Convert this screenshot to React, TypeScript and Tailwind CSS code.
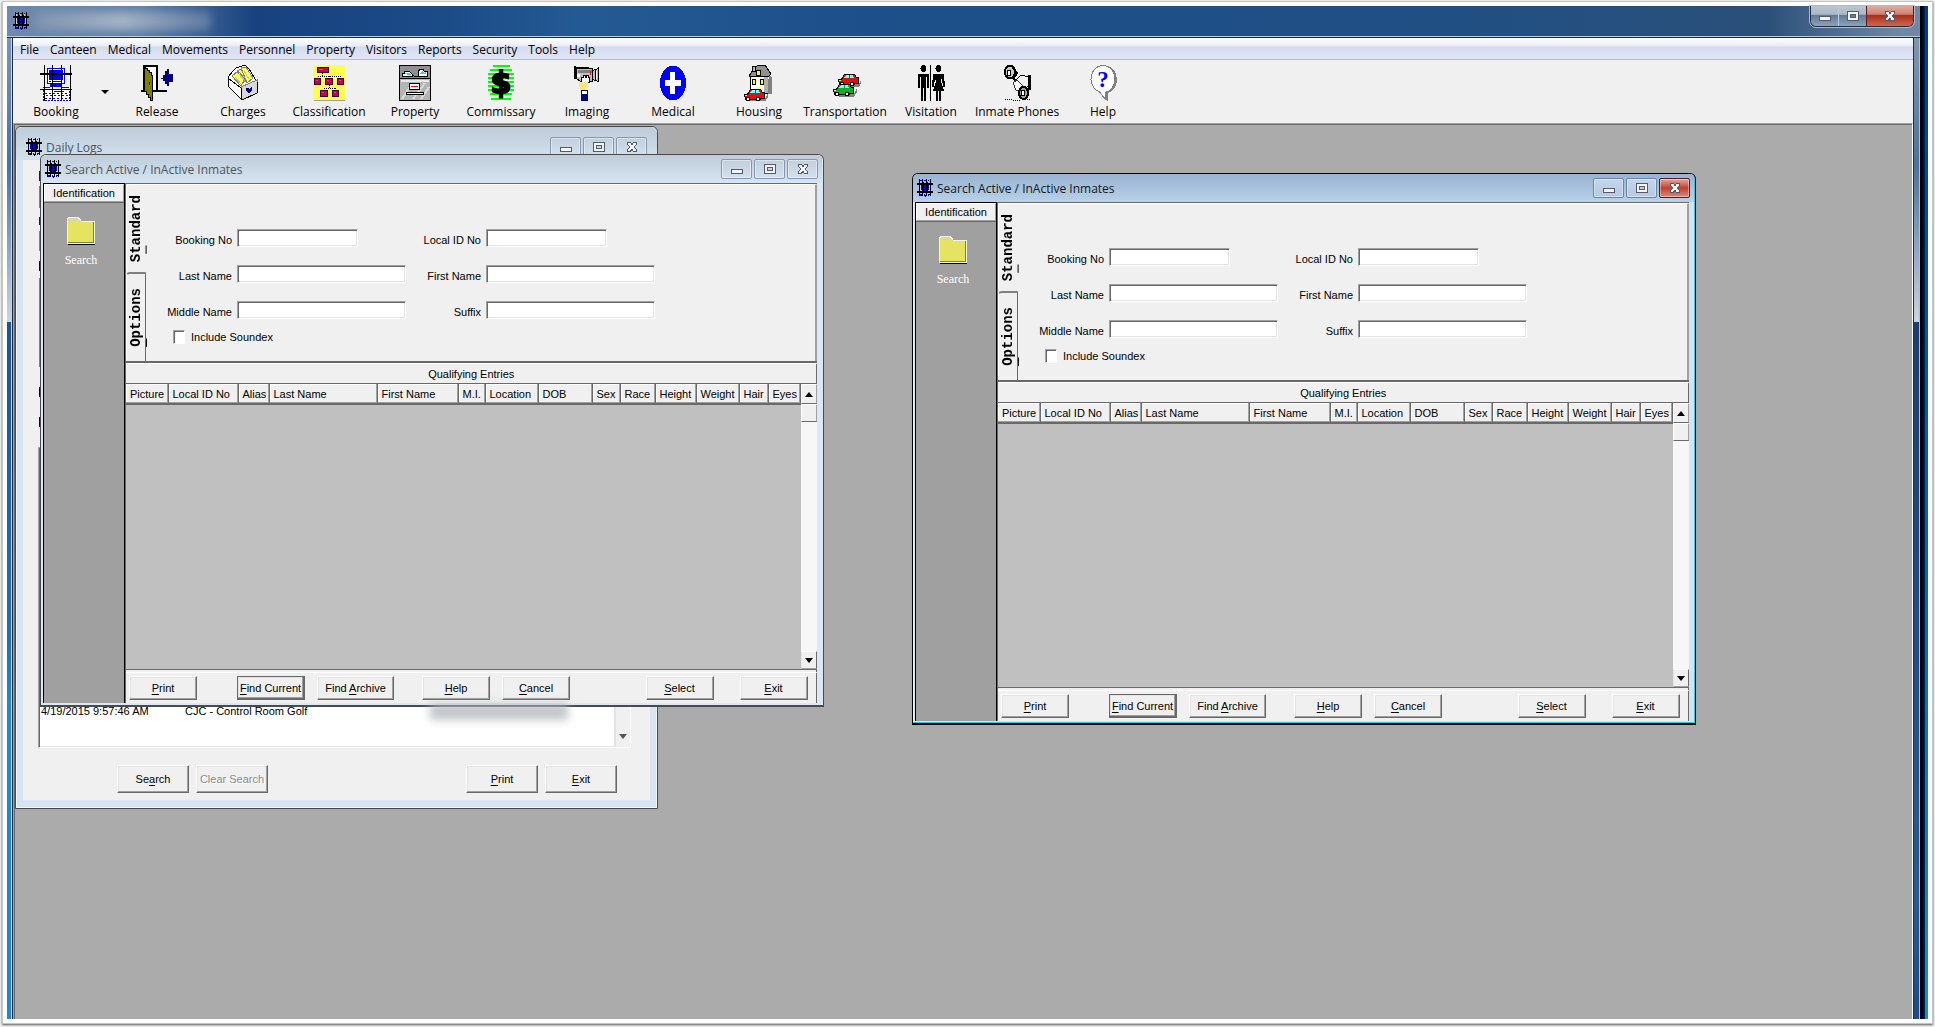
import { useId } from 'react';
import type { ReactNode } from 'react';

const MENU = [
  'File',
  'Canteen',
  'Medical',
  'Movements',
  'Personnel',
  'Property',
  'Visitors',
  'Reports',
  'Security',
  'Tools',
  'Help',
];

const COLUMNS = [
  { label: 'Picture', width: 42 },
  { label: 'Local ID No', width: 70 },
  { label: 'Alias', width: 31 },
  { label: 'Last Name', width: 108 },
  { label: 'First Name', width: 81 },
  { label: 'M.I.', width: 27 },
  { label: 'Location', width: 53 },
  { label: 'DOB', width: 54 },
  { label: 'Sex', width: 28 },
  { label: 'Race', width: 35 },
  { label: 'Height', width: 41 },
  { label: 'Weight', width: 43 },
  { label: 'Hair', width: 29 },
  { label: 'Eyes', width: 32 },
];

// "&" marks the access key, as in a Windows resource string
function Hot({ text }: { text: string }) {
  const at = text.indexOf('&');
  if (at < 0) return <span>{text}</span>;
  return (
    <span>
      {text.slice(0, at)}
      <span className="underline underline-offset-2">{text[at + 1]}</span>
      {text.slice(at + 2)}
    </span>
  );
}

function Glyph({ children }: { children: ReactNode }) {
  return (
    <svg viewBox="0 0 32 36" className="h-9 w-8" shapeRendering="crispEdges" aria-hidden="true">
      {children}
    </svg>
  );
}

function BarsIcon() {
  return (
    <svg viewBox="0 0 16 18" className="h-[18px] w-4 shrink-0" shapeRendering="crispEdges" aria-hidden="true">
      <path d="M3 1h2v1H3zM7 1h2v1H7zM11 1h1v1h-1zM4 6h1v5H4zM7 6h2v6H7zM11 6h1v5h-1zM3 15h1v2H3zM7 15h1v2H7zM11 15h1v2h-1z" fill="#0000ff" />
      <path d="M3 2h1v2H3zM7 2h1v2H7zM11 2h1v2h-1zM3 6h1v6H3zM12 6h1v6h-1z" fill="#c8ccd8" />
      <path d="M2 0h1v17H2zM5 0h1v17H5zM6 3h1v10H6zM9 0h1v17H9zM10 3h1v10h-1zM13 0h1v17h-1zM0 4h16v2H0zM0 12h16v2H0zM4 15h1v2H4zM8 16h1v2H8zM12 15h1v1h-1z" fill="#000" />
    </svg>
  );
}

function Booking() {
  return (
    <Glyph>
      <path d="M7.500 3.500h17v15h-17z" fill="#fff" stroke="#00f" />
      <path d="M9 5h14v10H9z" fill="#00f" />
      <path d="M9 16h2v1H9zM13 16h8v1h-8zM10 19h12v3H10zM3 22h7v1H3zM22 22h7v1h-7z" fill="#00f" />
      <path d="M3.500 24.500h26v11h-26z" fill="#fff" stroke="#00f" strokeDasharray="2 1" />
      <path d="M5 28h23M6 30h22M5 33h23" stroke="#00f" strokeDasharray="2 2" />
      <path d="M14 26h10v1H14z" fill="#00f" />
      <path d="M4 0h1v36H4zM12 0h1v36h-1zM21 0h1v36h-1zM30 0h1v36h-1zM0 8h32v2H0zM0 24h32v1H0z" fill="#000" />
    </Glyph>
  );
}

function Release() {
  return (
    <Glyph>
      <path d="M2 0h15v25h9v2H0v-2h2z" fill="#000" />
      <path d="M5 2h10v23H5z" fill="#fff" />
      <path d="M3 3h3v2h2v2h2v3h1v25H9v-3H7v-3H5v-3H3z" fill="#808000" stroke="#000" />
      <path d="M8 17h1v3H8z" fill="#000" />
      <path d="M20 13h2v-3h2V6h2V4h2v5h4v8h-4v4h-2v-2h-2v-3h-2v-2h-2z" fill="#000080" />
    </Glyph>
  );
}

function Charges() {
  return (
    <Glyph>
      <path d="M1 12 6 6l3-3 9-3 4 4 5 8 3 6v10l-15 7L1 21z" fill="#fff" stroke="#000" />
      <path d="m5 11 6-5 7 8-4 7zM10 6l6-3 7 9-5 5z" fill="#ffff40" stroke="#808080" />
      <path d="m14 3 5-1 7 11-6 5z" fill="#ffff60" stroke="#808080" />
      <path d="m8 12 6 7M12 9l6 7M17 6l5 8" stroke="#c0c0a0" />
      <path d="m14 22 16-7v13l-15 7z" fill="#d8d8d8" stroke="#808080" />
      <path d="M1 13l13 10v12M1 13v8l14 14 15-7V17" fill="none" stroke="#000" />
      <path d="M19 23h2l1 1 3-3v4l-3 4-3-3z" fill="#000080" />
    </Glyph>
  );
}

function Classification() {
  return (
    <Glyph>
      <path d="M1 1h32v35H1z" fill="#a0a0a0" />
      <path d="M0 0h32v35H0z" fill="#ffff50" />
      <path d="M9 8v3M5 11h22M16 11v3M5 11v3M27 11v3M16 20v3M11 23h11M11 23v3M22 23v3" stroke="#000" strokeDasharray="1 1" fill="none" />
      <g fill="#c00060" stroke="#400020">
        <path d="M4.500 2.500h11v5h-11zM1.500 13.500h6v6h-6zM12.500 13.500h7v6h-7zM24.500 13.500h6v6h-6zM7.500 25.500h7v6h-7zM19.500 25.500h6v6h-6z" />
      </g>
      <path d="M6 4h4v1H6zM3 15h2v1H3zM14 15h2v1h-2zM26 15h2v1h-2zM9 27h2v1H9zM21 27h2v1h-2z" fill="#ff3090" />
    </Glyph>
  );
}

function Property() {
  return (
    <Glyph>
      <path d="M.5.500h31v35H.5z" fill="#b4b4b4" stroke="#000" />
      <path d="M1 1h30v12H1z" fill="#909090" />
      <path d="M3 11V8h2V6h5l3 3v2zM19 11V7l2-3h3l1 2h3v5z" fill="#fff" stroke="#000" />
      <path d="M5 8h5l2 2H9zM20 9l3-3 2 2 2-1v2z" fill="#20d8e0" />
      <path d="m12 8 3 3h4" fill="none" stroke="#000" />
      <path d="M0 13h32v1H0z" fill="#000" />
      <path d="M2 15h28v2H2z" fill="#e8e8e8" />
      <path d="m3 34 8-12M14 34l12-16M22 34l8-12" stroke="#d8d8d8" strokeWidth="2" />
      <path d="M10.500 18.500h10v6h-10z" fill="#fff" stroke="#000" />
      <path d="M12 21h7v1h-7z" fill="#f00" />
      <path d="M7.500 27.500h17v2h-17z" fill="#fff" stroke="#000" />
    </Glyph>
  );
}

function Commissary() {
  return (
    <Glyph>
      <path
        d="M8 1h17M5 5h22M3 9h26M3 13h26M3 17h26M3 21h26M3 25h26M5 29h22M6 34h20"
        stroke="#00ff00"
        strokeWidth="2"
      />
      <text x="16" y="28" textAnchor="middle" fontSize="30" fontWeight="bold" fontFamily="DejaVu Sans, sans-serif" stroke="#000" strokeWidth="2">
        $
      </text>
    </Glyph>
  );
}

function Imaging() {
  return (
    <Glyph>
      <path d="M5.500 3.500h16v13h-12l-4-3zM21.500 5.500l6-2v13l-6-2z" fill="#c0c0c0" stroke="#000" />
      <path d="M3 1h2v13H3zM5 2h13v2H5zM24 4h1v12h-1zM27 2h1v15h-1z" fill="#000" />
      <path d="M7 5h14v3H7z" fill="#808080" />
      <path d="M6 9h3v3H6zM25 6h1v8h-1z" fill="#fff" />
      <path d="M19 6h1v4h-1z" fill="#f00" />
      <path d="M10 12h2v-2h2v2h1v-2h2v2h1v5h-8z" fill="#fff" stroke="#000" />
      <path d="M8 17h9v5l-2 3h-5l-2-4z" fill="#ffe680" />
      <path d="M10 25h6v4h-6z" fill="#fff" stroke="#000" />
      <path d="M10 29h7v7h-7z" fill="#000080" />
    </Glyph>
  );
}

function Medical() {
  return (
    <Glyph>
      <ellipse cx="16" cy="18" rx="13" ry="17.500" fill="#00f" />
      <path d="M13 7h5v8h6v6h-6v8h-5v-8H8v-6h5z" fill="#fff" />
    </Glyph>
  );
}

function Car({ x, y, color }: { x: number; y: number; color: string }) {
  return (
    <g transform={`translate(${x} ${y})`}>
      <path d="M4 11h17l3-6v4l-3 5H6z" fill="#808080" />
      <path d="M.5 6.500h3l3-5h10l2 3h2v6h-3l-2 1h-14z" fill={color} stroke="#000" />
      <path d="M6 5l2-3h3v3zM12 2h3l1 3h-4z" fill="#7ff" />
      <circle cx="4" cy="11" r="2" fill="#fff" stroke="#000" />
      <circle cx="14" cy="11" r="2" fill="#fff" stroke="#000" />
      <path d="M1 7h2v1H1z" fill="#ff0" />
    </g>
  );
}

function Housing() {
  return (
    <Glyph>
      <path d="m26 9 3 4v16h-5z" fill="#808080" />
      <path d="M7.500 11.500h17v17h-17z" fill="#fff" stroke="#000" />
      <path d="M21 11h4v17h-4z" fill="#b0b0b0" />
      <path d="m6 11 5-8V1h3l1-1h7l6 9-3 3z" fill="#909090" stroke="#000" />
      <path d="M9.500 1.500h3v5h-3z" fill="#c0c0c0" stroke="#000" />
      <path d="M13.500 5.500h4v5h-4z" fill="#ff0" stroke="#000" />
      <path d="M9.500 14.500h3v5h-3zM17.500 14.500h3v5h-3z" fill="#ff0" stroke="#000" />
      <path d="M14 21h4v7h-4z" fill="#ff8" />
      <Car x={1} y={23} color="#e01010" />
    </Glyph>
  );
}

function Transportation() {
  return (
    <Glyph>
      <Car x={9} y={8} color="#e01010" />
      <Car x={4} y={18} color="#10b020" />
    </Glyph>
  );
}

function Visitation() {
  return (
    <Glyph>
      <ellipse cx="8.500" cy="3.500" rx="3" ry="3.500" />
      <path d="M3 9h11v14h-2V12h-1v24H9V23H8v13H6V12H5v11H3z" />
      <path d="M15 0h1v36h-1z" />
      <ellipse cx="23.500" cy="3.500" rx="3" ry="3.500" />
      <path d="M18 9h11l1 13h-2l-1-9-1 3 3 10h-3v10h-2V26h-1v10h-2V26h-3l3-10-1-3-1 9h-2z" />
    </Glyph>
  );
}

function InmatePhones() {
  return (
    <Glyph>
      <ellipse cx="9" cy="7" rx="5" ry="6.500" fill="#c8c8c8" stroke="#000" strokeWidth="2" />
      <ellipse cx="8" cy="8" rx="2" ry="3" fill="#fff" stroke="#000" />
      <path d="m12 3 4 5-3 5M12 13l5 5" fill="none" stroke="#000" strokeWidth="2" />
      <path d="M15.500 14.500l4-4 8 1v10l-6 2-6-6z" fill="#f0f0f0" stroke="#000" />
      <path d="m12 18 4-3 6 6-3 4h-4z" fill="#fff" stroke="#333" />
      <path d="M27 10h3v15h-3z" />
      <ellipse cx="22.500" cy="28" rx="4.500" ry="6" fill="#a0a0a0" stroke="#000" strokeWidth="2" />
      <ellipse cx="22" cy="28" rx="2" ry="3" fill="#fff" stroke="#000" />
      <path d="M4 34.500h8M12 35.500h7M22 34.500h8" stroke="#000" strokeDasharray="1 1" />
    </Glyph>
  );
}

function HelpBubble() {
  return (
    <Glyph>
      <path d="M18 1c8 0 12 7 12 14 0 6-4 11-9 13v8l-8-7z" fill="#808080" />
      <path d="M16 .5C9 .5 4 7 4 14.500c0 6 4 11 8.500 12.500l6 7.500V27.500C24 26 28 21 28 14.500 28 7 23 .5 16 .5z" fill="#fff" stroke="#808080" />
      <text x="16" y="22" textAnchor="middle" fontSize="23" fontWeight="bold" fontFamily="Liberation Serif, serif" fill="#00f">
        ?
      </text>
    </Glyph>
  );
}

const TOOLS = [
  { label: 'Release', icon: <Release /> },
  { label: 'Charges', icon: <Charges /> },
  { label: 'Classification', icon: <Classification /> },
  { label: 'Property', icon: <Property /> },
  { label: 'Commissary', icon: <Commissary /> },
  { label: 'Imaging', icon: <Imaging /> },
  { label: 'Medical', icon: <Medical /> },
  { label: 'Housing', icon: <Housing /> },
  { label: 'Transportation', icon: <Transportation /> },
  { label: 'Visitation', icon: <Visitation /> },
  { label: 'Inmate Phones', icon: <InmatePhones /> },
  { label: 'Help', icon: <HelpBubble /> },
];

function ToolButton({ label, icon }: { label: string; icon: ReactNode }) {
  return (
    <button type="button" className="flex w-[86px] shrink-0 flex-col items-center pt-[5px] whitespace-nowrap">
      {icon}
      <span className="mt-[3px] leading-4">{label}</span>
    </button>
  );
}

function CaptionGlyph({ kind }: { kind: string }) {
  return (
    <svg viewBox="0 0 12 12" className="h-3 w-3" shapeRendering="crispEdges" aria-hidden="true">
      {kind === 'Minimize' && <path d="M.5 6.500h11v4H.5z" fill="#f4f4f4" stroke="#555a6b" />}
      {kind === 'Maximize' && (
        <path d="M.5 1.500h11v9H.5zM3.500 4.500h5v3h-5z" fill="#f4f4f4" stroke="#555a6b" fillRule="evenodd" />
      )}
      {kind === 'Close' && (
        <path
          d="M1.500 1.500h3L6 4l1.500-2.500h3v2L8 6l2.500 2.500v2h-3L6 8l-1.500 2.500h-3v-2L4 6 1.500 3.500z"
          fill="#f4f4f4"
          stroke="#555a6b"
        />
      )}
    </svg>
  );
}

function CaptionButtons({ active }: { active?: boolean }) {
  const plain = active
    ? 'border-[#6c84ab] bg-linear-to-b from-[#c3d5ea] to-[#b4cbe4]'
    : 'border-[#8796b4] bg-linear-to-b from-[#c2cfdd] to-[#d3e0ee]';
  const close = active ? 'border-[#5a1a20] bg-linear-to-b from-[#e0a69b] via-[#c04028] to-[#d8887a]' : plain;
  return (
    <div className="flex gap-0.5">
      {['Minimize', 'Maximize', 'Close'].map(kind => (
        <button
          key={kind}
          type="button"
          aria-label={kind}
          className={`flex h-5 w-[31px] items-center justify-center rounded-xs border inset-shadow-[0_0_0_1px_#ffffff66] ${kind === 'Close' ? close : plain}`}
        >
          <CaptionGlyph kind={kind} />
        </button>
      ))}
    </div>
  );
}

function PushButton({ text, size, disabled, focused }: { text: string; size: string; disabled?: boolean; focused?: boolean }) {
  return (
    <button
      type="button"
      disabled={disabled}
      className={`flex shrink-0 items-center justify-center border bg-[#f0f0f0] leading-4 whitespace-nowrap inset-shadow-[-1px_-1px_0_#a0a0a0,1px_1px_0_#e3e3e3] ${size} ${
        focused
          ? 'border-[#696969] border-r-2 border-b-2'
          : 'border-t-white border-r-[#696969] border-b-[#696969] border-l-white'
      } ${disabled ? 'text-[#8a8a8a] text-shadow-[1px_1px_0_#fff]' : 'text-black'}`}
    >
      <Hot text={text} />
    </button>
  );
}

function Field({ label, width }: { label: string; width: string }) {
  const id = useId();
  return (
    <>
      <label htmlFor={id} className="h-[18px] pt-1 text-right leading-[14px] whitespace-nowrap">
        {label}
      </label>
      <input
        id={id}
        type="text"
        className={`h-[18px] border border-t-[#a0a0a0] border-r-white border-b-white border-l-[#a0a0a0] bg-white px-1 outline-none inset-shadow-[1px_1px_0_#696969,-1px_-1px_0_#e3e3e3] ${width}`}
      />
    </>
  );
}

function SideBar() {
  return (
    <aside className="flex w-[82px] shrink-0 flex-col border-x border-t border-black bg-[#a0a0a0]">
      <button
        type="button"
        className="h-[18px] border border-t-white border-r-[#a0a0a0] border-b-[#a0a0a0] border-l-white bg-[#f0f0f0] leading-4 shadow-[0_1px_0_#696969]"
      >
        Identification
      </button>
      <button type="button" className="mt-3.5 flex flex-col items-center pr-1.5">
        <svg viewBox="0 0 30 30" className="h-[30px] w-[30px]" shapeRendering="crispEdges" aria-hidden="true">
          <path d="M2 7h27v22H2z" fill="#000" />
          <path d="M1 6V4l2-3h9l3 4h13v22H1z" fill="#e4e460" stroke="#f4f4e0" />
          <path d="M2 26h26v1H2zM27 6h1v21h-1z" fill="#808040" />
          <path d="M3 2h9l2 3H2z" fill="#d8d8a0" />
        </svg>
        <span className="mt-1 font-['Liberation_Serif',serif] text-xs leading-5 text-white">Search</span>
      </button>
    </aside>
  );
}

function ScrollBar() {
  return (
    <div className="flex w-4 shrink-0 flex-col bg-[#f7f7f7]">
      <button
        type="button"
        aria-label="Scroll up"
        className="flex h-5 items-center justify-center border border-t-white border-r-[#a0a0a0] border-b-[#696969] border-l-white bg-[#f0f0f0]"
      >
        <svg viewBox="0 0 8 5" className="h-[5px] w-2" aria-hidden="true">
          <path d="M4 0 8 5H0z" />
        </svg>
      </button>
      <div className="h-[18px] border border-t-white border-r-[#a0a0a0] border-b-[#696969] border-l-white bg-[#f0f0f0]" />
      <button
        type="button"
        aria-label="Scroll down"
        className="mt-auto flex h-[18px] items-center justify-center border border-t-white border-r-[#696969] border-b-[#a0a0a0] border-l-[#e3e3e3] bg-[#f0f0f0]"
      >
        <svg viewBox="0 0 8 5" className="h-[5px] w-2" aria-hidden="true">
          <path d="M0 0h8L4 5z" />
        </svg>
      </button>
    </div>
  );
}

function Tab({ text, selected }: { text: string; selected?: boolean }) {
  return (
    <button
      type="button"
      role="tab"
      aria-selected={!!selected}
      className={`flex h-[90px] items-center justify-center rounded-l-sm border-t border-l font-['Liberation_Mono',monospace] text-sm font-bold ${
        selected ? 'border-white pr-1' : 'mr-0.5 border-t-2 border-r border-t-[#808080] border-r-[#696969] border-l-white'
      }`}
    >
      <span className="rotate-180 leading-5 [writing-mode:vertical-rl]">
        <Hot text={text} />
      </span>
    </button>
  );
}

function SearchWindow({ place, active }: { place: string; active?: boolean }) {
  const soundexId = useId();
  return (
    <section
      className={`absolute flex w-[784px] flex-col overflow-hidden rounded-t-md border border-b-2 ${place} ${
        active ? 'border-black border-b-black bg-[#d3e4f5] inset-shadow-[-1px_-1px_0_#33c8e8,1px_1px_0_#e8f4fc]' : 'border-[#4b4b4b] bg-[#dce9f5] inset-shadow-[0_1px_0_#eef5fb]'
      }`}
    >
      <header
        className={`mr-px flex h-7 shrink-0 items-center gap-1 px-1 ${
          active ? 'bg-linear-to-b from-[#98b3d0] to-[#b9d1ea] text-[#101820]' : 'bg-linear-to-b from-[#bfcddb] to-[#d7e4f2] text-[#4a5560]'
        }`}
      >
        <BarsIcon />
        <h2 className="flex-1 pt-0.5 font-['Open_Sans','Noto_Sans',sans-serif] text-xs">Search Active / InActive Inmates</h2>
        <CaptionButtons active={active} />
      </header>
      <div className="mr-1.5 mb-0.5 ml-0.5 flex flex-1 border-r border-r-[#696969] bg-[#f0f0f0]">
        <SideBar />
        <div className="flex flex-1 flex-col border-t border-l border-[#696969]">
          <div className="flex h-[179px] border-b-2 border-b-[#696969]">
            <div role="tablist" className="flex w-[22px] shrink-0 flex-col">
              <Tab text="S&tandard" selected />
              <Tab text="&Options" />
            </div>
            <form className="flex-1 border-t border-r-2 border-t-white border-r-[#a0a0a0] pt-11">
              <div className="grid grid-cols-[84px_169px_70px_1fr] gap-x-[5px] gap-y-[18px]">
                <Field label="Booking No" width="w-[121px]" />
                <Field label="Local ID No" width="w-[121px]" />
                <Field label="Last Name" width="w-[169px]" />
                <Field label="First Name" width="w-[169px]" />
                <Field label="Middle Name" width="w-[169px]" />
                <Field label="Suffix" width="w-[169px]" />
              </div>
              <div className="mt-2.5 ml-[25px] flex items-center gap-1.5">
                <input
                  id={soundexId}
                  type="checkbox"
                  className="h-[14px] w-3 appearance-none border border-t-[#a0a0a0] border-r-white border-b-white border-l-[#a0a0a0] bg-white inset-shadow-[1px_1px_0_#696969]"
                />
                <label htmlFor={soundexId} className="leading-4">
                  Include Soundex
                </label>
              </div>
            </form>
          </div>
          <h3 className="h-5 border-t border-white text-center leading-5">Qualifying Entries</h3>
          <div className="flex flex-1 border-y border-[#696969]">
            <div className="flex-1 bg-[#c0c0c0]">
              <table className="w-full table-fixed border-collapse">
                <thead>
                  <tr className="h-5 border-b-2 border-[#696969] bg-[#f0f0f0]">
                    {COLUMNS.map(column => (
                      <th
                        key={column.label}
                        scope="col"
                        style={{ width: column.width }}
                        className="border-r border-[#696969] p-0 pl-1 text-left leading-4 font-normal whitespace-nowrap inset-shadow-[-1px_-1px_0_#a0a0a0,1px_1px_0_#fff]"
                      >
                        {column.label}
                      </th>
                    ))}
                  </tr>
                </thead>
                <tbody />
              </table>
            </div>
            <ScrollBar />
          </div>
          <div className="mt-0.5 flex h-[31px] items-center border-t border-white pr-[9px] pl-[3px]">
            <PushButton text="&Print" size="h-6 w-[68px]" />
            <div className="ml-10 flex gap-3">
              <PushButton text="&Find Current" size="h-6 w-[68px]" focused />
              <PushButton text="Find &Archive" size="h-6 w-[77px]" />
            </div>
            <div className="ml-7 flex gap-3">
              <PushButton text="&Help" size="h-6 w-[68px]" />
              <PushButton text="&Cancel" size="h-6 w-[68px]" />
            </div>
            <div className="ml-auto flex gap-[26px]">
              <PushButton text="&Select" size="h-6 w-[68px]" />
              <PushButton text="&Exit" size="h-6 w-[68px]" />
            </div>
          </div>
        </div>
      </div>
    </section>
  );
}

function DailyLogs() {
  return (
    <section className="absolute top-0.5 left-px flex h-[683px] w-[643px] flex-col rounded-t-md border border-[#4b4b4b] bg-[#d7e4f2] inset-shadow-[0_0_0_1px_#f2f7fc]">
      <header className="flex h-[33px] shrink-0 items-center gap-1 rounded-t-md bg-linear-to-b from-[#bfcddb] to-[#d3e1ec] pt-1.5 pr-2.5 pl-2.5 text-[#4a5560]">
        <BarsIcon />
        <h2 className="flex-1 pt-0.5 font-['Open_Sans','Noto_Sans',sans-serif] text-xs">Daily Logs</h2>
        <CaptionButtons />
      </header>
      <div className="mx-[7px] mb-2 flex flex-1 flex-col bg-[#f0f0f0] pt-[11px]">
        <div className="ml-4 flex w-0.5 flex-col">
          <span className="h-2.5 bg-[#0000ff]" />
          <span className="mt-[5px] h-[22px] bg-[#808080]" />
          <span className="mt-[9px] h-2 bg-[#0000ff]" />
          <span className="mt-1.5 h-5 bg-[#808080]" />
          <span className="mt-2.5 h-2.5 bg-black" />
          <span className="mt-[7px] h-[89px] bg-[#808080]" />
          <span className="mt-5 h-2.5 bg-black" />
          <span className="mt-5 h-2.5 bg-black" />
        </div>
        <div className="mt-5 mr-[19px] ml-[15px] flex flex-1 border border-t-[#a0a0a0] border-r-white border-b-white border-l-[#a0a0a0] bg-white inset-shadow-[1px_1px_0_#696969,-1px_-1px_0_#e3e3e3]">
          <div className="mb-7 flex flex-1 items-end pl-0.5 leading-4">
            <span className="w-36">4/19/2015 9:57:46 AM</span>
            <span>CJC - Control Room Golf</span>
          </div>
          <div className="flex w-4 items-end justify-center border-l-2 border-[#e3e3e3] bg-[#f0f0f0] pb-2">
            <svg viewBox="0 0 8 5" className="h-[5px] w-2" aria-hidden="true">
              <path d="M0 0h8L4 5z" fill="#555" />
            </svg>
          </div>
        </div>
        <div className="mt-[17px] mb-[7px] flex gap-[7px] pr-[33px] pl-[94px]">
          <PushButton text="Se&arch" size="h-7 w-[72px]" />
          <PushButton text="Clear Search" size="h-7 w-[72px]" disabled />
          <div className="ml-auto flex gap-[7px]">
            <PushButton text="&Print" size="h-7 w-[72px]" />
            <PushButton text="&Exit" size="h-7 w-[72px]" />
          </div>
        </div>
      </div>
    </section>
  );
}

function TitleBar() {
  return (
    <header className="flex h-8 shrink-0 items-start justify-between border-b border-[#1c2f4a] bg-[linear-gradient(to_right,#6f8aad_0%,#5f7fa8_7%,#17427f_13%,#1b4a86_22%,#245a94_30%,#1d4f8a_45%,#204f84_75%,#2a5079_92%,#7088a5_99%)] pl-1.5 inset-shadow-[0_-1px_0_#b8cbe2]">
      <div className="flex items-center gap-1.5 pt-1.5">
        <BarsIcon />
        <div className="h-[18px] w-44 rounded bg-linear-to-r from-[#7e93ae] via-[#a3b3c6] to-[#5f7aa0] blur-xs" />
      </div>
      <div className="mr-1.5 flex h-[21px] overflow-hidden rounded-b-md border border-t-0 border-[#1e2c40] outline outline-[#a9bccf]">
        <button
          type="button"
          aria-label="Minimize"
          className="flex w-7 items-center justify-center border-r border-[#c0ccd8] bg-[linear-gradient(to_bottom,#b9c5d2,#a9b8c8_42%,#5f7a98_45%,#8ba3bb)]"
        >
          <CaptionGlyph kind="Minimize" />
        </button>
        <button
          type="button"
          aria-label="Restore"
          className="flex w-[27px] items-center justify-center bg-[linear-gradient(to_bottom,#b9c5d2,#a9b8c8_42%,#5f7a98_45%,#8ba3bb)]"
        >
          <CaptionGlyph kind="Maximize" />
        </button>
        <button
          type="button"
          aria-label="Close"
          className="flex w-[47px] items-center justify-center border-l border-[#5a1a20] bg-[linear-gradient(to_bottom,#e0aaa0,#cf7f72_42%,#a82c18_45%,#cf6650)]"
        >
          <CaptionGlyph kind="Close" />
        </button>
      </div>
    </header>
  );
}

export default function App() {
  return (
    <div className="h-screen overflow-hidden bg-[#f4f4f4] px-0.5 pt-px pb-[3px] font-['Liberation_Sans',sans-serif] text-[11px] text-black">
      <div className="flex h-full border border-[#c4c4c4] bg-white p-1 shadow-[0_1px_2px_#555]">
        <div className="flex min-w-0 flex-1 flex-col">
          <TitleBar />
          <div className="flex min-h-0 flex-1">
            <div className="w-[5px] border-r border-[#b9d6ec] bg-[linear-gradient(to_bottom,#7d94b3_0%,#4a6fa2_13%,#c9d5e2_29%,#1b559a_29%,#1f70b4_61%,#2288c8_68%)]" />
            <div className="flex min-w-0 flex-1 flex-col border-x border-[#1c2f4a] bg-[#f0f0f0]">
              <nav className="flex h-[22px] shrink-0 items-center gap-[11px] border-b border-[#b6bccc] bg-[linear-gradient(to_bottom,#fff,#e9edf8_38%,#d5dbee_42%,#e2e7f7)] pt-0.5 pl-[7px] font-['Open_Sans','Noto_Sans',sans-serif] text-xs">
                {MENU.map(item => (
                  <button key={item} type="button">
                    {item}
                  </button>
                ))}
              </nav>
              <div className="flex h-[63px] shrink-0 items-stretch font-['Open_Sans','Noto_Sans',sans-serif] text-xs">
                <ToolButton label="Booking" icon={<Booking />} />
                <button type="button" aria-label="Booking options" className="flex w-[15px] items-center pl-0.5">
                  <svg viewBox="0 0 8 4" className="h-1 w-2" aria-hidden="true">
                    <path d="M0 0h8L4 4z" />
                  </svg>
                </button>
                {TOOLS.map(tool => (
                  <ToolButton key={tool.label} label={tool.label} icon={tool.icon} />
                ))}
              </div>
              <main className="relative min-h-0 flex-1 overflow-hidden border border-t-[#a0a0a0] border-r-white border-b-0 border-l-[#a0a0a0] bg-[#ababab] inset-shadow-[1px_1px_0_#696969]">
                <DailyLogs />
                <SearchWindow place="top-[30px] left-[26px] h-[553px]" />
                <SearchWindow place="top-[49px] left-[898px] h-[552px]" active />
                <div className="absolute top-[580px] left-[416px] h-4 w-[138px] bg-[#b4b8bc] opacity-80 blur-xs" />
              </main>
            </div>
            <div className="w-1.5 border-r border-[#aebfd0] bg-[linear-gradient(to_bottom,#7f98b0_0%,#4f7296_13%,#c9d5e2_29%,#1d3f70_29%,#2a5a92_88%,#1d4a88_100%)]" />
          </div>
        </div>
        <div className="flex w-2">
          <div className="flex-1 bg-linear-to-r from-black to-[#00265c]" />
          <div className="w-[3px] bg-linear-to-b from-[#003c8c] to-[#1a94b0]" />
        </div>
      </div>
    </div>
  );
}
